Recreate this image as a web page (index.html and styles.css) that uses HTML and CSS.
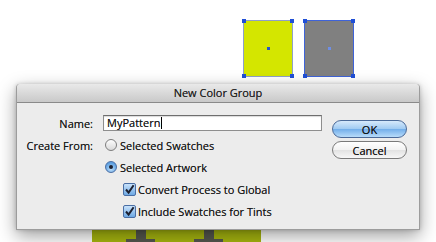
FILE: index.html
```html
<!DOCTYPE html>
<html lang="en">
<head>
  <meta charset="UTF-8" />
  <title>New Color Group</title>
  <link rel="stylesheet" href="styles.css">
</head>
<body>
<div class="artboard">

  <!-- artwork on the canvas -->
  <div class="swatch swatch-yellow">
    <span class="handle tl"></span><span class="handle tr"></span>
    <span class="handle bl"></span><span class="handle br"></span>
    <span class="center-dot"></span>
  </div>
  <div class="swatch swatch-gray">
    <span class="handle tl"></span><span class="handle tr"></span>
    <span class="handle bl"></span><span class="handle br"></span>
    <span class="center-dot"></span>
  </div>
  <div class="pattern">
    <span class="tee tee-1"></span>
    <span class="tee tee-2"></span>
  </div>

  <!-- dialog -->
  <div class="dialog">
    <div class="dialog-title">New Color Group</div>
    <div class="dialog-body">
      <div class="form">
        <label class="form-label">Name:</label>
        <div class="form-control">
          <div class="text-input">MyPattern<span class="caret"></span></div>
        </div>

        <label class="form-label">Create From:</label>
        <div class="form-control option">
          <span class="radio"></span>
          <span>Selected Swatches</span>
        </div>

        <span></span>
        <div class="form-control option">
          <span class="radio checked"></span>
          <span>Selected Artwork</span>
        </div>

        <span></span>
        <div class="form-control option sub">
          <span class="checkbox">
            <svg width="13" height="13" viewBox="0 0 13 13"><path d="M3 6.5 L5.6 9.6 L10.6 2.2" fill="none" stroke="#1c2030" stroke-width="2"/></svg>
          </span>
          <span>Convert Process to Global</span>
        </div>

        <span></span>
        <div class="form-control option sub">
          <span class="checkbox">
            <svg width="13" height="13" viewBox="0 0 13 13"><path d="M3 6.5 L5.6 9.6 L10.6 2.2" fill="none" stroke="#1c2030" stroke-width="2"/></svg>
          </span>
          <span>Include Swatches for Tints</span>
        </div>
      </div>

      <div class="buttons">
        <button class="btn btn-default">OK</button>
        <button class="btn">Cancel</button>
      </div>
    </div>
  </div>
</div>
</body>
</html>
```

FILE: styles.css
```css
/* Reset */
* {
  margin: 0;
  padding: 0;
  box-sizing: border-box;
}

html, body {
  width: 436px;
  height: 242px;
  overflow: hidden;
  background: #fff;
  font-family: 'Open Sans', 'DejaVu Sans', sans-serif;
  font-size: 11px;
  color: #161616;
  text-shadow: 0 0 0.5px rgba(0, 0, 0, 0.6);
}

.artboard {
  position: relative;
  width: 436px;
  height: 242px;
  padding: 84px 0 0 16px;
}

/* Artwork (free canvas) */
.swatch {
  position: absolute;
  top: 20px;
  width: 50px;
  height: 57px;
}

.swatch-yellow {
  left: 243px;
  background: #d4e600;
  border: 1px solid #8fa0c8;
}

.swatch-gray {
  left: 304px;
  background: #808080;
  border: 1px solid #3f63d8;
}

.handle {
  position: absolute;
  width: 4px;
  height: 4px;
  background: #1f4fd6;
}
.handle.tl { top: -2px; left: -2px; }
.handle.tr { top: -2px; right: -2px; }
.handle.bl { bottom: -2px; left: -2px; }
.handle.br { bottom: -2px; right: -2px; }

.center-dot {
  position: absolute;
  top: 26px;
  left: 23px;
  width: 3px;
  height: 3px;
  background: #2855c8;
}
.swatch-gray .center-dot { background: #6f8fe6; }

.pattern {
  position: absolute;
  left: 92px;
  top: 226px;
  width: 169px;
  height: 16px;
  background: #a7b60f;
}

.tee {
  position: absolute;
  top: 0;
  width: 10px;
  height: 16px;
  background: #55574f;
}
.tee::after {
  content: "";
  position: absolute;
  left: -10px;
  top: 13px;
  width: 29px;
  height: 4px;
  background: #55574f;
}
.tee-1 { left: 44px; }
.tee-2 { left: 112px; }

/* Dialog */
.dialog {
  position: relative;
  z-index: 2;
  width: 404px;
  height: 146px;
  background: #ececec;
  border: 1px solid #9c9c9c;
  border-top: none;
  border-radius: 4px 4px 0 0;
  box-shadow: 0 6px 18px rgba(0, 0, 0, 0.38), 0 0 4px rgba(0, 0, 0, 0.18);
}

.dialog-title {
  height: 19px;
  line-height: 18px;
  text-align: center;
  font-size: 11px;
  color: #222;
  background: linear-gradient(#e9e9e9, #c9c9c9);
  border-bottom: 1px solid #8a8a8a;
  border-radius: 4px 4px 0 0;
}

.dialog-body {
  display: flex;
  gap: 10px;
  padding: 9px 12px 0 0;
}

.form {
  display: grid;
  grid-template-columns: 76px 219px;
  grid-auto-rows: 22px;
  column-gap: 10px;
  align-items: center;
}

.form-label {
  text-align: right;
}

.text-input {
  height: 16px;
  line-height: 14px;
  padding-left: 3px;
  background: #fff;
  border: 1px solid #8e8e8e;
  border-top-color: #6e6e6e;
  box-shadow: inset 0 1px 1px rgba(0, 0, 0, 0.15);
}

.caret {
  display: inline-block;
  width: 1px;
  height: 12px;
  margin-left: 1px;
  vertical-align: -2px;
  background: #000;
}

.option {
  display: flex;
  align-items: center;
  gap: 3px;
  padding-left: 2px;
}

.option.sub {
  padding-left: 20px;
  gap: 2px;
}

.radio {
  width: 12px;
  height: 12px;
  border-radius: 50%;
  border: 1px solid #7d7d7d;
  background: linear-gradient(#fdfdfd, #d9d9d9);
  display: flex;
  align-items: center;
  justify-content: center;
}

.radio.checked {
  border-color: #4a6ea4;
  background: radial-gradient(circle at 50% 70%, #bfe0fb, #5d9fe0 70%);
}
.radio.checked::after {
  content: "";
  width: 4px;
  height: 4px;
  border-radius: 50%;
  background: #1c2030;
}

.checkbox {
  width: 13px;
  height: 13px;
  border: 1px solid #4a6ea4;
  border-radius: 2px;
  background: linear-gradient(#c8e2fb, #6ea9e4);
  display: flex;
}
.checkbox svg {
  margin: -1px;
}

.buttons {
  display: flex;
  flex-direction: column;
  gap: 3px;
  padding-top: 8px;
}

.btn {
  width: 75px;
  height: 18px;
  border-radius: 9px;
  font-family: inherit;
  font-size: 11px;
  color: #111;
  text-shadow: inherit;
  border: 1px solid #7a7a7a;
  background: linear-gradient(#ffffff, #f2f2f2 50%, #e2e2e2 51%, #f7f7f7);
}

.btn-default {
  border-color: #4b6a99;
  background: linear-gradient(#d6e9fb, #9fcaf2 50%, #72aeea 51%, #b8dcfa);
}
```
